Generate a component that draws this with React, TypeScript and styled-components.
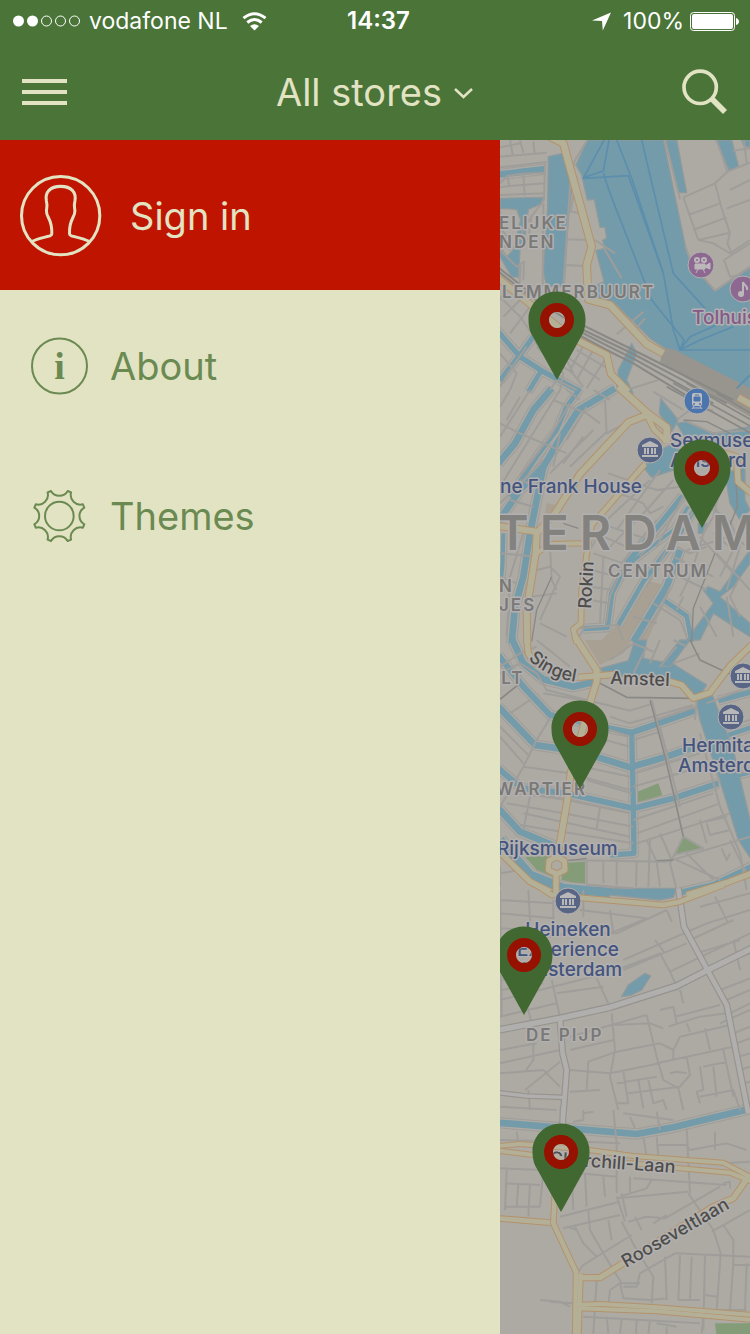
import React from "react";
import styled, { createGlobalStyle } from "styled-components";

const color = {
  green: "#4a7438",
  cream: "#e2e3c3",
  red: "#bf1500",
  item: "#6b8a52",
  land: "#adaaa3",
  halo: "#b2b0b0",
  water: "#749ba9",
  waterEdge: "#8f9a9d",
  ferry: "#5c8ead",
  street: "#9f9d9a",
  avenue: "#b0afae",
  avenueEdge: "#96938e",
  main: "#b4b097",
  mainEdge: "#b3926c",
  rail: "#898885",
  yard: "#98958f",
  park: "#849c78",
  block: "#a8a193",
  pin: "#426832",
  ring: "#971100",
};

const GlobalStyle = createGlobalStyle`
  * { box-sizing: border-box; }
  body { margin: 0; background: ${color.green}; }
  button, a { font: inherit; color: inherit; }
`;

const Shell = styled.div`
  display: flex;
  flex-direction: column;
  min-height: 100vh;
  font-family: Inter, "Liberation Sans", sans-serif;
`;

const StatusBar = styled.div`
  display: grid;
  grid-template-columns: 1fr auto 1fr;
  align-items: center;
  height: 42px;
  padding: 0 11px 0 12px;
  background: ${color.green};
  color: #fff;
  font-size: 23px;
  line-height: 28px;
`;

const StatusGroup = styled.div<{ $end?: boolean }>`
  display: flex;
  align-items: center;
  justify-content: ${(p) => (p.$end ? "flex-end" : "flex-start")};
  gap: ${(p) => (p.$end ? "6px" : "8px")};
`;

const Clock = styled.time`
  padding-left: 6px;
  font-size: 24px;
  font-weight: 600;
`;

const Percent = styled.span`
  margin-left: 6px;
`;

const Carrier = styled.span`
  margin-right: 6px;
`;

const NavBar = styled.header`
  display: grid;
  grid-template-columns: 1fr auto 1fr;
  align-items: center;
  height: 98px;
  padding: 2px 22px 0 21px;
  background: ${color.green};
  color: ${color.cream};
`;

const IconButton = styled.button<{ $end?: boolean }>`
  display: flex;
  justify-self: ${(p) => (p.$end ? "end" : "start")};
  padding: 0;
  border: 0;
  background: none;
  cursor: pointer;
`;

const StorePicker = styled.button`
  display: flex;
  align-items: center;
  gap: 12px;
  padding: 0;
  border: 0;
  background: none;
  font-size: 38px;
  line-height: 48px;
  cursor: pointer;
`;

const Body = styled.main`
  display: flex;
  flex: 1;
`;

const Drawer = styled.nav`
  flex: 2 0 0;
  min-width: 0;
  background: ${color.cream};
`;

const DrawerLink = styled.a<{ $primary?: boolean }>`
  display: flex;
  align-items: center;
  height: 150px;
  gap: ${(p) => (p.$primary ? "28px" : "22px")};
  padding-top: 2px;
  padding-left: ${(p) => (p.$primary ? "20px" : "30px")};
  background: ${(p) => (p.$primary ? color.red : "transparent")};
  color: ${(p) => (p.$primary ? color.cream : color.item)};
  font-size: 38px;
  line-height: 48px;
  text-decoration: none;
`;

const MapPane = styled.section`
  position: relative;
  display: flex;
  flex: 1 0 0;
  min-width: 0;
  overflow: hidden;
  background: ${color.land};
`;

const MapDrawing = styled.svg`
  display: block;
  width: 100%;
  min-height: 1192px;
`;

const District = styled.text`
  fill: #7a7976;
  font-size: 17px;
  font-weight: 600;
  letter-spacing: 2px;
`;

const City = styled.text`
  fill: #83827f;
  font-size: 48px;
  font-weight: 600;
  letter-spacing: 11px;
`;

const Place = styled.text<{ $venue?: boolean }>`
  fill: ${(p) => (p.$venue ? "#845a8a" : "#44547d")};
  font-size: 19px;
  font-weight: 500;
`;

const Street = styled.text`
  fill: #4e4d4a;
  font-size: 18px;
  font-weight: 500;
`;

const Labels = styled.g`
  stroke: ${color.halo};
  stroke-width: 3px;
  stroke-linejoin: round;
  paint-order: stroke;
`;

const PinButton = styled.button<{ $x: number; $y: number }>`
  position: absolute;
  left: ${(p) => p.$x}px;
  top: ${(p) => p.$y}px;
  display: flex;
  padding: 0;
  border: 0;
  background: none;
  cursor: pointer;
`;

/* Map sheets are drawn at three units to the pixel, each from its own top edge. */
type Sheet = {
  y: number;
  water?: string[];
  land?: string[];
  parks?: string[];
  blocks?: string[];
  yards?: string[];
  canals?: [number, string][];
  streets?: string[];
  ferries?: string[];
  rails?: [number, string][];
  avenues?: [number, string][];
  mains?: [number, string][];
};

const sheets: Sheet[] = [
  {
    y: 0,
    water: [
      "M262 0 228 75 245 105 262 180 283 178 300 262 315 262 320 295 308 300 313 325 288 332 312 425 282 440 275 475 340 485 450 595 495 625 700 735 750 770 750 385 645 452 575 372 556 318 490 0Z",
      "M145 50 188 40 217 130 204 250 192 440 140 440 130 395 143 200Z",
      "M497 0 530 0 560 158 535 158Z",
      "M648 0 695 0 716 80 688 92Z",
      "M0 175 130 172 122 192 85 208 75 290 60 330 55 412 35 410 0 350Z",
      "M395 610 410 640 380 720 400 760 350 750 355 690Z",
      "M725 0 750 0 750 22 732 18Z",
    ],
    land: ["M0 205 50 208 62 240 40 330 20 350 0 320Z"],
    yards: ["M490 625 520 628 750 745 750 830 640 765 480 665Z"],
    parks: ["M705 500 750 485 750 520 712 518Z"],
    canals: [
      [20, "M-5 104 70 95 133 88"],
      [16, "M-10 570 60 650 130 695 240 755"],
      [16, "M100 590 60 645 0 722"],
      [14, "M125 690 85 755"],
    ],
    streets: [
      "M0 22 60 10M60 0 70 38M0 50 140 38M30 0 38 44M100 5 104 40M0 82 140 66",
      "M0 130 22 108 60 102 135 98M22 108 28 138 0 142M70 100 74 168M28 138 134 130M0 165 135 160M135 70 132 180 70 262 62 300",
      "M262 0 225 60 212 110 190 440M230 110 212 215M212 215 236 218M200 298 262 300M195 375 255 378",
      "M0 262 20 290 30 330 0 310M0 330 50 380 62 372 58 440M60 372 72 365 70 420M130 190 128 440M95 225 85 300",
      "M285 300 345 340M312 325 365 415M430 515 350 583M435 535 395 580",
      "M0 470 60 530 110 600M30 440 0 480M60 480 10 530M90 500 30 580M100 600 150 655 220 700M80 620 30 690 0 740M110 620 190 700 180 750M0 640 50 700 30 750",
      "M240 590 200 660 220 700M285 620 230 720M230 630 330 690M200 650 300 720M260 600 210 690 250 740M320 650 260 745M150 750 170 720 230 750",
      "M495 0 540 178M550 172 645 130 682 95 750 68M550 172 595 300 640 310 690 340 750 300M645 130 665 205 690 280 682 310 695 340M565 225 660 190M580 270 680 232M595 300 690 278M650 0 682 95M672 360 690 410 720 405M672 360 750 310M556 318 575 372 645 452 750 380M700 32 750 25M732 0 740 70M690 150 750 120M680 205 750 180",
    ],
    ferries: [
      "M312 0 250 115 385 107 490 400 520 570 540 630 750 630",
      "M327 0 310 93 252 112M310 100 330 160 455 480 552 600 540 630",
      "M350 0 395 115 490 400M425 0 520 400 615 505",
      "M540 630 570 590 650 555M540 630 600 600 700 560M750 705 710 745",
    ],
    rails: [
      [6, "M-5 382 80 450 250 556 400 630 520 690 700 780"],
      [6, "M-5 394 80 462 250 570 400 642 510 700 680 790"],
      [6, "M235 572 320 616 400 656 560 745 640 790"],
      [6, "M235 584 320 630 400 670 540 755 600 790"],
    ],
    mains: [
      [20, "M150 -10 190 10 212 90 275 320 260 375 265 478 330 495 440 612 490 640"],
      [18, "M-5 415 90 492 180 565 240 605 320 645 333 702 385 755"],
    ],
  },
  {
    y: 750,
    water: [
      "M482 25 535 90 515 125 478 70Z",
      "M430 232 480 180 510 165 540 180 520 240 455 262Z",
      "M530 100 560 95 640 130 750 110 750 165 660 170 560 150Z",
      "M675 250 735 230 735 330 750 360 720 390 690 340Z",
      "M595 400 620 400 610 430 595 430Z",
      "M750 520 700 590 660 620 750 700 750 740 640 670 600 750 560 750 640 640 610 600 625 590 660 605 750 480Z",
    ],
    blocks: [
      "M430 570 515 590 440 755 300 755 365 690 400 600Z",
      "M140 340 170 345 160 380 135 370Z",
    ],
    canals: [
      [20, "M155 -5 100 60 45 160 -5 220"],
      [20, "M345 -5 235 60 190 130 130 230 60 300 -5 395"],
      [14, "M240 -5 200 50 170 120 110 200 30 320"],
      [20, "M130 230 110 330 90 430 70 560 45 650 35 760"],
      [12, "M10 430 8 520 0 600"],
      [16, "M548 318 490 390 380 520 335 610 322 712 250 716"],
      [14, "M600 330 540 430 430 575 355 705"],
      [20, "M540 480 500 590 400 755"],
      [14, "M490 630 560 678 575 755"],
      [10, "M565 350 520 420 390 520"],
    ],
    streets: [
      "M0 100 60 130 200 190M160 30 260 70 300 100M210 40 150 140 60 260M260 50 200 150M60 20 20 90M180 0 130 80 0 290M30 0 0 50M90 0 0 140M280 0 330 30M200 0 240 30",
      "M0 340 80 260 130 210M60 270 110 290M30 330 100 350M70 430 30 560 20 740M0 490 110 500M0 560 50 580",
      "M315 30 320 130 385 95M320 125 210 230M250 140 190 220M280 120 150 250M180 130 160 230",
      "M325 250 470 300 540 290M360 310 430 340M450 270 320 390 270 480M480 240 350 420M520 270 440 360 330 470M300 400 450 450M430 340 450 370 490 350M290 430 400 480M280 490 370 520M275 540 350 560M272 590 340 600M268 630 330 640M310 500 300 700",
      "M470 390 380 500 330 620 318 700M500 400 420 500M560 300 470 470M590 350 500 480 440 590M620 400 570 560 540 620M530 470 570 490 620 470M520 500 640 560M500 540 620 600M640 430 700 480 660 560M690 390 720 470 680 600M600 440 700 550M650 490 750 600M560 480 720 430M510 590 480 660 420 750M460 640 540 690 560 740",
      "M640 340 680 420 740 470M620 350 680 380M660 300 640 380 610 430M550 620 530 660M720 560 690 620 720 680M600 650 650 740M680 620 700 740",
      "M110 540 150 530 180 560 120 690M150 470 155 570 170 600M95 620 170 610M120 700 200 740M250 720 230 750M350 700 370 750M400 680 470 700",
      "M530 90 570 60 640 60M560 95 640 130 750 120M540 150 640 170M240 715 350 705M395 -5 475 -30M460 5 550 60",
    ],
    rails: [
      [5, "M520 -20 750 108M560 -20 750 88M500 -10 750 128M650 10 750 68"],
      [4, "M550 90 620 95 690 130M190 400 235 415M690 405 712 350 705 210M645 490 580 655 575 755M155 560 110 660 95 755"],
    ],
    mains: [
      [20, "M355 -10 440 68 500 112 500 160"],
      [18, "M440 75 385 97 240 252 165 370 110 430 107 490 80 660 82 760"],
      [14, "M440 75 462 118 500 155"],
      [18, "M-5 408 110 425"],
      [12, "M110 490 150 462 240 460 262 465"],
      [14, "M435 222 345 325 275 405 262 480 245 600 243 700 220 718 230 760"],
      [16, "M675 190 710 200 714 275 755 310"],
      [18, "M715 22 755 45"],
    ],
  },
  {
    y: 1500,
    water: [
      "M300 85 385 62 405 0 440 0 430 55 520 72 620 135 590 180 500 110 320 108Z",
      "M540 0 570 0 510 80 480 78Z",
      "M585 165 635 160 700 330 755 560 755 660 715 600 665 440 600 240Z",
    ],
    blocks: ["M255 0 395 0 370 40 300 75Z"],
    parks: [
      "M405 458 475 430 487 465 408 490Z",
      "M75 650 155 648 145 690 160 710 110 690Z",
      "M185 700 200 668 255 665 255 735 185 720Z",
      "M550 587 605 625 528 642Z",
    ],
    canals: [
      [20, "M35 -5 70 70 130 118 220 140 285 125"],
      [18, "M-5 45 70 140 150 225 330 265 395 278 585 212"],
      [20, "M-5 200 105 315 240 335 390 382 500 350 600 315"],
      [18, "M-5 385 65 445 200 460 400 505 520 475 655 430"],
      [16, "M395 270 400 500 402 640 330 645"],
      [20, "M-5 505 60 575 180 625"],
      [28, "M0 600 90 705 190 745 330 758"],
      [16, "M655 182 755 155"],
      [14, "M685 285 755 262"],
      [14, "M705 408 755 395"],
      [18, "M540 758 640 735 755 680"],
    ],
    streets: [
      "M0 100 60 70 110 100 140 150 390 212 460 190M110 20 60 40 0 80M130 160 300 190M110 0 210 80M330 60 400 10 460 35M400 100 440 20M450 70 480 0M480 80 530 20M520 0 560 20",
      "M150 235 110 300 70 380 30 450 0 500M0 260 90 350M70 380 210 400 390 450M60 460 200 480 390 520M20 490 190 520 400 560M70 520 390 590M60 555 400 610M90 470 70 570M300 500 290 570M0 290 70 370M30 220 90 180",
      "M330 230 390 250 580 195M270 250 390 290M280 290 390 320M250 380 390 410M260 420 395 460M400 300 480 275M405 400 600 340M400 440 640 370M400 540 640 460M410 580 660 490M410 610 690 520",
      "M455 180 500 370 550 590 510 670 530 750M480 260 540 500M640 370 660 430M590 180 585 240M470 240 590 200M520 70 600 40M600 280 660 500 720 640 740 750",
      "M180 660 500 665 750 590M440 600 470 665 480 740M480 580 515 660M450 600 445 740M410 665 408 740M260 660 260 735 400 745M310 660 310 730M350 665 350 735M600 540 620 610M620 550 630 585 690 570M615 545 680 530M520 655 660 720M560 640 640 720M665 625 680 660 690 640M690 600 740 700M0 680 0 740M60 690 0 700M550 590 610 625 520 645",
      "M620 190 750 140M680 260 750 240M700 330 750 310M720 400 750 390M700 380 660 400",
    ],
    rails: [
      [5, "M300 130 380 172 585 175M570 0 600 60 750 130M0 178 60 130"],
      [4, "M450 180 500 370 550 590M205 662 260 655M470 662 520 660"],
    ],
    mains: [
      [16, "M80 -5 85 40 110 75"],
      [18, "M225 -10 290 90 290 125 272 182 212 400 202 480 178 620 170 650"],
      [16, "M235 112 345 103"],
      [16, "M500 122 545 135 580 175 630 158 690 78 755 15"],
      [16, "M168 700 168 760"],
      [16, "M-5 632 90 725 150 755"],
      [16, "M560 765 680 728 755 700"],
      [15, "M170 650 193 662 195 690 170 702 145 690 147 662Z"],
    ],
  },
  {
    y: 2250,
    water: ["M250 -5 530 -5 520 22 480 30 260 8Z", "M365 320 385 285 435 250 452 258 425 300 395 315Z"],
    streets: [
      "M0 0 5 380M0 70 160 85M0 30 160 40M85 0 90 90 80 150M160 30 160 130M240 60 440 85M250 0 250 80M330 60 340 130M0 115 100 120M100 150 200 130 350 130 500 60M440 85 330 130M500 60 515 95",
      "M350 240 480 190 510 245 530 290M465 150 495 190M370 210 620 100M370 240 560 160M510 245 750 130M570 150 700 90M590 190 720 150M645 20 685 100M600 50 750 10M620 100 750 60M700 150 720 240M630 230 750 190",
      "M0 330 320 250M290 265 325 340M155 270 180 380M80 340 95 400M0 380 170 340M0 300 130 280M170 310 310 290M0 270 50 260",
      "M0 520 180 480M0 550 130 540 180 590M75 600 180 515M100 460 100 510 75 545M0 480 110 460M85 600 90 660M0 650 170 660M210 540 330 550 480 520M260 600 265 515 350 485 480 460M335 370 345 480 330 560 355 660M210 605 300 600M210 440 440 375M210 480 340 450",
      "M440 375 470 500 490 570 535 595 570 555 560 500M345 405 450 400 490 415M480 360 520 350 530 400M505 410 600 380 680 370M525 380 660 345M540 300 550 340M560 400 570 425M520 480 540 440 690 405M480 460 520 480 520 510M470 520 700 470M510 550 530 545 560 550M535 595 550 660M370 545 385 640 350 640M350 580 470 560M415 570 430 655M445 570 460 640 490 630 500 660M385 610 540 590M615 415 630 480M600 530 610 600 590 605 600 640M640 530 650 620M670 480 700 620M610 530 680 515M600 620 700 600 720 660",
      "M660 400 750 360M690 370 750 340M680 330 750 300M660 300 750 265M700 430 750 410M710 460 750 445M715 500 750 490M720 540 750 530M730 580 750 575",
    ],
    avenues: [
      [16, "M-5 420 180 385 330 352 530 288 620 242 755 175"],
      [14, "M535 -5 552 110 625 245 680 345 745 670"],
      [14, "M180 390 188 490 200 540 190 670"],
      [10, "M-5 608 80 618 190 622"],
    ],
    mains: [[14, "M110 -15 155 15 260 25 490 45 540 35 670 -15"]],
  },
  {
    y: 2910,
    parks: ["M645 640 755 640 755 680 650 680Z"],
    canals: [[20, "M-5 38 240 58 410 72 520 52 755 -5"]],
    streets: [
      "M50 65 55 100M0 90 250 95 360 100M250 0 250 30 220 35M340 0 350 100 350 250M250 10 280 5M370 10 520 30M390 20 405 55M470 5 480 60M560 55 570 250M645 65 645 120M430 80 440 140M470 80 475 140M470 105 560 105 570 120 680 100 740 120M670 160 750 155",
      "M0 175 130 180M20 180 15 300M20 220 120 225M15 290 120 290M55 220 50 290M90 220 85 320M130 180 120 290M240 190 350 200M255 190 260 290M310 200 315 260M215 190 220 300",
      "M180 320 360 275M190 355 360 315M350 265 565 245M360 260 440 235 455 210M390 200 390 250M400 205 680 225M350 260 375 335M365 250 380 320M385 335 440 320 495 325 660 230M405 320 425 360M460 340 500 315M565 250 640 360 662 430 650 600M635 365 750 300M670 345 700 390 700 460 690 600",
      "M225 350 250 400 290 440M265 300 270 360 310 430 365 520M325 330 335 390M230 490 250 465 395 375M200 350 230 360M365 335 410 420 460 500 455 580M495 440 500 570M525 430 750 440M540 435 535 570M575 440 570 570M615 435 610 660M525 430 420 490 410 530 370 530M360 520 370 565 450 570 500 565M330 540 360 520 420 520M330 540 325 590M535 570 600 570M740 460 735 600M700 465 750 465M650 600 740 600M615 555 650 560",
      "M120 570 180 575 210 590M150 575 220 580M290 510 280 670M320 620 325 670M365 630 360 670M410 630 408 670M450 630 445 670M250 620 600 640M470 640 530 650M500 650 500 672M610 620 605 670M670 220 690 215 690 235",
    ],
    avenues: [[14, "M190 -10 186 100"]],
    mains: [
      [12, "M-5 108 60 102 250 118 400 138 670 158 750 200"],
      [12, "M-5 122 100 135 300 150 540 175 690 188 755 215"],
      [16, "M745 200 700 265 640 290 300 503 235 503"],
      [14, "M-5 325 150 338M165 240 160 340 230 490"],
      [13, "M228 480 225 690"],
      [13, "M242 490 235 690"],
      [12, "M225 585 300 582 470 592 755 615"],
      [12, "M235 595 470 604 755 630"],
    ],
  },
];

const roads = (list: [number, string][] | undefined, extra: number, stroke: string) =>
  (list ?? []).map(([width, d]) => <path key={d} d={d} strokeWidth={width + extra} stroke={stroke} />);

const lines = (list: string[] | undefined, stroke: string, width: number) =>
  (list ?? []).map((d) => <path key={d} d={d} stroke={stroke} strokeWidth={width} />);

const areas = (list: string[] | undefined, fill: string, edge?: string) =>
  (list ?? []).map((d) => <path key={d} d={d} fill={fill} stroke={edge} strokeWidth={4} />);

const layers: ((s: Sheet) => React.ReactNode)[] = [
  (s) => areas(s.blocks, color.block),
  (s) => areas(s.parks, color.park),
  (s) => roads(s.canals, 14, color.street),
  (s) => roads(s.canals, 8, color.land),
  (s) => areas(s.water, color.water, color.waterEdge),
  (s) => areas(s.land, color.land, color.waterEdge),
  (s) => areas(s.yards, color.yard),
  (s) => roads(s.canals, 0, color.water),
  (s) => lines(s.streets, color.street, 6),
  (s) => lines(s.ferries, color.ferry, 5),
  (s) => roads(s.rails, 0, color.rail),
  (s) => roads(s.avenues, 7, color.avenueEdge),
  (s) => roads(s.avenues, 0, color.avenue),
  (s) => roads(s.mains, 6, color.mainEdge),
  (s) => roads(s.mains, 0, color.main),
];

const Terrain = () => (
  <g fill="none" strokeLinejoin="round">
    {layers.map((layer, i) => (
      <g key={i}>
        {sheets.map((s) => (
          <g key={s.y} transform={`scale(${1 / 3}) translate(0 ${s.y})`}>
            {layer(s)}
          </g>
        ))}
      </g>
    ))}
  </g>
);

const Museum = ({ x, y }: { x: number; y: number }) => (
  <g transform={`translate(${x} ${y})`}>
    <circle r="13" fill="#596585" stroke={color.halo} strokeWidth="1" />
    <g fill="#b9b8b8">
      <path d="M0-9 8-5V-3H-8V-5Z" />
      <path d="M-6-2h2v6h-2zM-3-2h2v6h-2zM1-2h2v6h-2zM4-2h2v6h-2zM-8 5H8V7H-8Z" />
    </g>
  </g>
);

const PointsOfInterest = () => (
  <g>
    <g transform="translate(201 125)">
      <circle r="13" fill="#8d6992" stroke={color.halo} strokeWidth="1" />
      <g fill="none" stroke="#bcb8ba" strokeWidth="2">
        <circle cx="-4" cy="-5" r="2" />
        <circle cx="3" cy="-5" r="2" />
      </g>
      <path d="M-6-1H4V1L9-2V4L4 2V4H-6ZM-3 4-5 8M2 4 4 8" fill="#bcb8ba" stroke="#bcb8ba" />
    </g>
    <g transform="translate(243 149)">
      <circle r="13" fill="#8d6992" stroke={color.halo} strokeWidth="1" />
      <ellipse cx="-2" cy="5" rx="3" ry="3" fill="#bcb8ba" />
      <path d="M0 5V-7C1-3 5-4 4 1" fill="none" stroke="#bcb8ba" strokeWidth="2" />
    </g>
    <g transform="translate(197 261)">
      <circle r="13" fill="#4c74ad" stroke={color.halo} strokeWidth="1" />
      <rect x="-5" y="-8" width="10" height="13" rx="2" fill="#bcbcc0" />
      <path d="M-3-4H3V0H-3ZM-2-6H2" fill="#4c74ad" stroke="#4c74ad" />
      <path d="M-3 5-5 8M3 5 5 8M-4 7H4" stroke="#bcbcc0" />
      <circle cx="-3" cy="3" r="1" fill="#4c74ad" />
      <circle cx="3" cy="3" r="1" fill="#4c74ad" />
    </g>
    <Museum x={150} y={310} />
    <Museum x={243} y={536} />
    <Museum x={231} y={577} />
    <Museum x={68} y={761} />
  </g>
);

const MapLabels = () => (
  <Labels>
    <District x="-1" y="89">ELIJKE</District>
    <District x="-1" y="108">NDEN</District>
    <District x="2" y="158">LEMMERBUURT</District>
    <City x="-3" y="410">TERDAM</City>
    <District x="108" y="437">CENTRUM</District>
    <District x="-1" y="452">N</District>
    <District x="-1" y="471">JES</District>
    <District x="-11" y="544">ELT</District>
    <District x="-4" y="655">WARTIER</District>
    <District x="26" y="901">DE PIJP</District>
    <Place $venue x="192" y="184">Tolhuis</Place>
    <Place x="170" y="307">Sexmuse</Place>
    <Place x="170" y="327">Amsterd</Place>
    <Place x="0" y="353">ne Frank House</Place>
    <Place x="182" y="612">Hermita</Place>
    <Place x="178" y="632">Amsterd</Place>
    <Place x="-3" y="715">Rijksmuseum</Place>
    <Place x="68" y="796" textAnchor="middle">Heineken</Place>
    <Place x="68" y="816" textAnchor="middle">Experience</Place>
    <Place x="70" y="836" textAnchor="middle">Amsterdam</Place>
    <Street transform="translate(91 469) rotate(-87)">Rokin</Street>
    <path id="singel" d="M28 519Q50 540 84 543" fill="none" stroke="none" />
    <Street><textPath href="#singel">Singel</textPath></Street>
    <Street transform="translate(110 544) rotate(2)">Amstel</Street>
    <Street transform="translate(175 1033) rotate(4)" textAnchor="end">Churchill-Laan</Street>
    <Street transform="translate(126 1128) rotate(-30)">Rooseveltlaan</Street>
  </Labels>
);

const pins = [
  { x: 28, y: 151, name: "Haarlemmerbuurt" },
  { x: 173, y: 299, name: "Centrum" },
  { x: 51, y: 560, name: "Vijzelstraat" },
  { x: -5, y: 786, name: "De Pijp" },
  { x: 32, y: 983, name: "Churchill-laan" },
];

const PinIcon = () => (
  <svg width="58" height="89" viewBox="0 0 58 89" aria-hidden="true">
    <path
      fillRule="evenodd"
      fill={color.pin}
      d="M29 .5C13 .5 .5 13 .5 28C.5 36 2 41 4.500 45L29 89 53.500 45C56 41 57.500 36 57.500 28C57.500 13 45 .5 29 .5ZM29 14a15 15 0 0 1 0 30a15 15 0 0 1 0-30Z"
    />
    <circle cx="29" cy="29" r="12.500" fill="none" stroke={color.ring} strokeWidth="9" />
    <circle cx="29" cy="29" r="7.500" fill="none" stroke="#b9b9b0" strokeOpacity="0.4" strokeWidth="1" />
  </svg>
);

const UserIcon = () => (
  <svg width="82" height="82" viewBox="60 105 245 245" fill="none" stroke="currentColor" strokeWidth="9" aria-hidden="true">
    <circle cx="181.5" cy="226.500" r="117" />
    <path d="M97 303C125 289 155 290 155 281C157 236 138 232 139 212C139 205 143 200 139 183C134 156 150 139 181.500 139C213 139 229 156 224 183C220 200 224 205 224 212C225 232 206 236 208 281C208 290 238 289 266 303" />
  </svg>
);

const InfoIcon = () => (
  <svg width="58" height="58" viewBox="0 0 58 58" aria-hidden="true">
    <circle cx="29.500" cy="29" r="27.500" fill="none" stroke="currentColor" strokeWidth="2" />
    <text x="29.500" y="42" textAnchor="middle" fill="currentColor" fontFamily="Liberation Serif, serif" fontWeight="700" fontSize="38">
      i
    </text>
  </svg>
);

const gearPath = (() => {
  const at = (deg: number, r: number) => {
    const a = (deg * Math.PI) / 180;
    return `${(88 + r * Math.cos(a)).toFixed(1)} ${(87 + r * Math.sin(a)).toFixed(1)}`;
  };
  let d = "";
  for (let k = 0; k < 8; k++) {
    const t = 22.5 + k * 45;
    d += `${k ? "L" : "M"}${at(t - 4, 79)}L${at(t + 4, 79)}A29 29 0 0 0 ${at(t + 41, 79)}`;
  }
  return d + "Z";
})();

const GearIcon = () => (
  <svg width="58" height="58" viewBox="0 0 174 174" fill="none" stroke="currentColor" strokeWidth="6" aria-hidden="true">
    <path d={gearPath} strokeLinejoin="round" />
    <circle cx="88" cy="87" r="43" />
  </svg>
);

export default function App() {
  return (
    <Shell>
      <GlobalStyle />
      <StatusBar>
        <StatusGroup>
          <svg width="69" height="12" viewBox="0 0 69 12" role="img" aria-label="Signal: 2 of 5">
            {[0, 1, 2, 3, 4].map((n) => (
              <circle key={n} cx={6.5 + n * 14} cy="6" r={n < 2 ? 5.5 : 5} fill={n < 2 ? "#fff" : "none"} stroke={n < 2 ? "none" : "#fff"} strokeWidth="1" />
            ))}
          </svg>
          <Carrier>vodafone NL</Carrier>
          <svg width="25" height="19" viewBox="0 0 25 19" role="img" aria-label="Wi-Fi">
            <g fill="none" stroke="#fff" strokeWidth="3">
              <path d="M1.500 6.200Q12.500-2.800 23.500 6.200" />
              <path d="M5.300 10.500Q12.500 4.500 19.700 10.500" />
            </g>
            <path d="M8 14Q12.500 10.300 17 14L12.500 18.500Z" fill="#fff" />
          </svg>
        </StatusGroup>
        <Clock>14:37</Clock>
        <StatusGroup $end>
          <svg width="19" height="19" viewBox="0 0 19 19" role="img" aria-label="Location">
            <path d="M0 8.500 19 .5 10.800 18.500 10 9Z" fill="#fff" />
          </svg>
          <Percent>100%</Percent>
          <svg width="49" height="19" viewBox="0 0 49 19" role="img" aria-label="Battery">
            <rect x=".5" y=".5" width="44" height="18" rx="3" fill="none" stroke="#fff" />
            <rect x="2" y="2" width="41" height="15" rx="2" fill="#fff" />
            <path d="M46 6C50 7 50 12 46 13Z" fill="#fff" />
          </svg>
        </StatusGroup>
      </StatusBar>
      <NavBar>
        <IconButton aria-label="Menu">
          <svg width="47" height="28" viewBox="0 0 47 28" fill="currentColor" aria-hidden="true">
            <path d="M1 1h45v4H1zM1 12h45v4H1zM1 23h45v4H1z" />
          </svg>
        </IconButton>
        <StorePicker>
          All stores
          <svg width="19" height="14" viewBox="0 0 19 14" fill="none" stroke="currentColor" strokeWidth="2.500" aria-hidden="true">
            <path d="M1 4 9.500 12 18 4" />
          </svg>
        </StorePicker>
        <IconButton $end aria-label="Search">
          <svg width="46" height="46" viewBox="920 209 138 138" fill="none" stroke="currentColor" aria-hidden="true">
            <circle cx="974.5" cy="264" r="48.500" strokeWidth="11" />
            <path d="M1007 296 1049 338" strokeWidth="17" />
          </svg>
        </IconButton>
      </NavBar>
      <Body>
        <Drawer aria-label="Main">
          <DrawerLink $primary href="#sign-in">
            <UserIcon />
            Sign in
          </DrawerLink>
          <DrawerLink href="#about">
            <InfoIcon />
            About
          </DrawerLink>
          <DrawerLink href="#themes">
            <GearIcon />
            Themes
          </DrawerLink>
        </Drawer>
        <MapPane aria-label="Store map">
          <MapDrawing viewBox="0 0 250 1194" preserveAspectRatio="xMinYMin slice">
            <Terrain />
            <PointsOfInterest />
            <MapLabels />
          </MapDrawing>
          {pins.map((p) => (
            <PinButton key={p.name} $x={p.x} $y={p.y} aria-label={p.name}>
              <PinIcon />
            </PinButton>
          ))}
        </MapPane>
      </Body>
    </Shell>
  );
}
